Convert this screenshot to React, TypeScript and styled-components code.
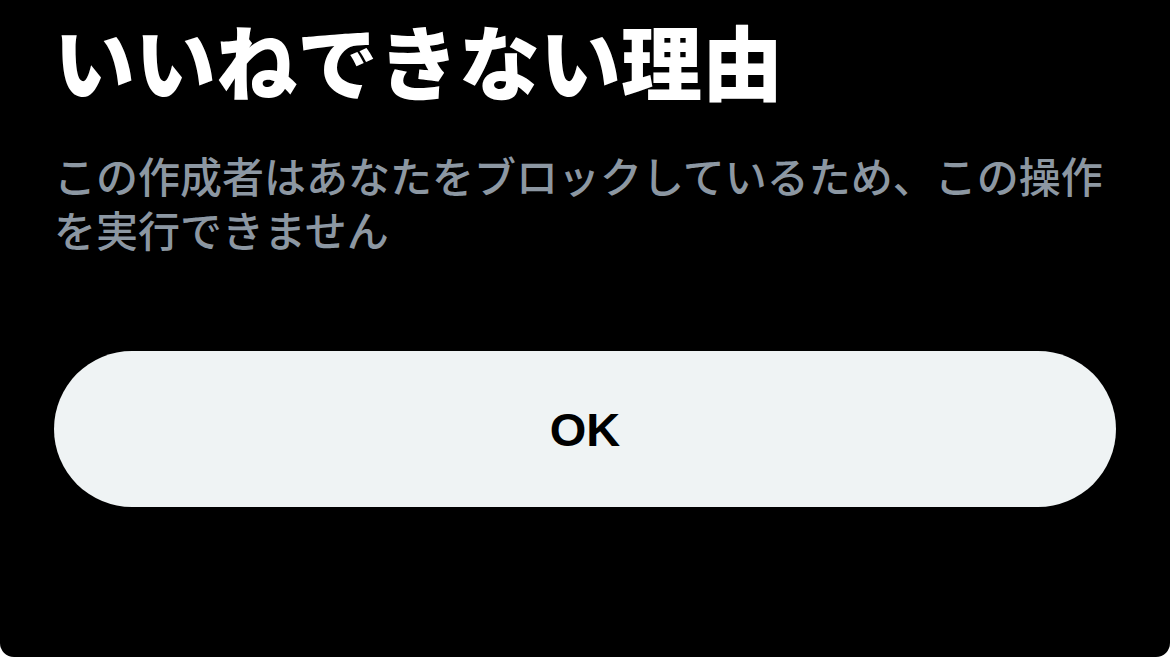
import React from 'react';
import styled, { createGlobalStyle } from 'styled-components';

const black = '#000000';
const white = '#ffffff';
const secondaryText = '#8c97a2';
const buttonFill = '#eff3f4';
const jpFont = '"Noto Sans CJK JP", "Noto Sans", sans-serif';

const GlobalStyle = createGlobalStyle`
  html, body {
    margin: 0;
    padding: 0;
    background: ${white};
  }
`;

const Sheet = styled.section`
  box-sizing: border-box;
  width: 1170px;
  height: 657px;
  background-color: ${black};
  border-radius: 0 0 14px 14px;
  padding: 11px 54px 0;
  display: flex;
  flex-direction: column;
  overflow: hidden;
`;

const Title = styled.h1`
  margin: 0;
  font-family: ${jpFont};
  font-size: 81px;
  line-height: 96px;
  font-weight: 900;
  color: ${white};
  white-space: nowrap;
`;

const Message = styled.p`
  margin: 41px 0 0;
  font-family: ${jpFont};
  font-size: 42px;
  line-height: 54px;
  font-weight: 500;
  color: ${secondaryText};
`;

const Actions = styled.div`
  margin-top: 95px;
  display: flex;
`;

const PillButton = styled.button`
  flex: 1;
  height: 156px;
  border: none;
  border-radius: 78px;
  background-color: ${buttonFill};
  color: ${black};
  font-family: 'Liberation Sans', Arial, sans-serif;
  font-size: 47px;
  font-weight: 700;
  cursor: pointer;
`;

const App = () => (
  <>
    <GlobalStyle />
    <Sheet>
      <Title>いいねできない理由</Title>
      <Message>
        この作成者はあなたをブロックしているため、この操作を実行できません
      </Message>
      <Actions>
        <PillButton type="button">OK</PillButton>
      </Actions>
    </Sheet>
  </>
);

export default App;
